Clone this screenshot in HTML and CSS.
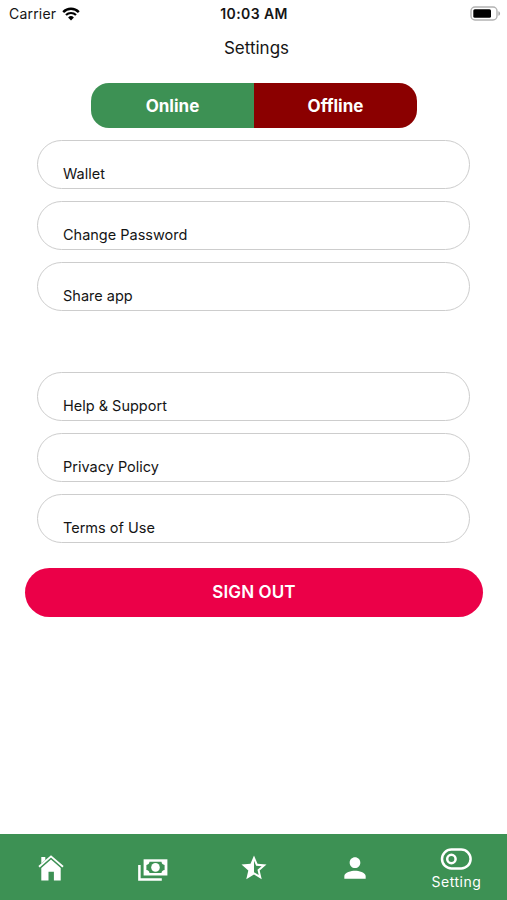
FILE: index.html
```
<!DOCTYPE html>
<html lang="en">
<head>
    <meta charset="UTF-8">
    <meta name="viewport" content="width=device-width, initial-scale=1.0">
    <title>Settings</title>
    <link rel="stylesheet" href="styles.css">
</head>
<body>
    <div class="status-bar">
        <div class="carrier">
            <span>Carrier</span>
            <svg width="18" height="14" viewBox="0 0 18 14">
                <path d="M1.2 5.1A11 11 0 0 1 16.8 5.1" fill="none" stroke="#000" stroke-width="2.5"/>
                <path d="M4 8.1A7 7 0 0 1 14 8.1" fill="none" stroke="#000" stroke-width="2.2"/>
                <path d="M6.1 10.4A4.2 4.2 0 0 1 11.9 10.4L9 13.4Z"/>
            </svg>
        </div>
        <div class="time">10:03 AM</div>
        <svg class="battery" width="31" height="15" viewBox="0 0 31 15">
            <rect x="1" y="1" width="26" height="13" rx="4" fill="#fff" stroke="#b3b3b3" stroke-width="1.4"/>
            <rect x="3.3" y="3.2" width="17.7" height="8.6" rx="1.5"/>
            <path d="M28.4 5.2c2.2.6 2.2 4 0 4.6z" fill="#aaa"/>
        </svg>
    </div>
    <h1>Settings</h1>
    <main>
        <div class="toggle">
            <button class="online">Online</button>
            <button class="offline">Offline</button>
        </div>
        <div class="menu">
            <a class="item">Wallet</a>
            <a class="item">Change Password</a>
            <a class="item">Share app</a>
        </div>
        <div class="menu more">
            <a class="item">Help &amp; Support</a>
            <a class="item">Privacy Policy</a>
            <a class="item">Terms of Use</a>
        </div>
        <button class="sign-out">SIGN OUT</button>
    </main>
    <nav class="tabs">
        <a class="tab">
            <svg width="26" height="26" viewBox="0 0 26 26" fill="#fff">
                <path d="M3.3 12.9L13 4.4l9.7 8.5V25.5h-6.8v-8.7h-5.4v8.7H3.3z"/>
                <path d="M1 11.7L13 1.4l12 10.3" fill="none" stroke="#fff" stroke-width="1.9"/>
                <path d="M3.3 2h4v3.1l-4 3.5z"/>
            </svg>
        </a>
        <a class="tab cash">
            <svg width="30" height="22" viewBox="0 0 30 22">
                <path d="M1.4 6v14.6H23.8" fill="none" stroke="#fff" stroke-width="2.5"/>
                <path d="M5.6.3h23.8v16.2H5.6z" fill="#fff"/>
                <path d="M11.5 2.8h12a3.4 3.4 0 0 0 3.1 3.1v5a3.4 3.4 0 0 0-3.1 3.1h-12a3.4 3.4 0 0 0-3.1-3.1v-5a3.4 3.4 0 0 0 3.1-3.1z" fill="#3d9154"/>
                <circle cx="17.5" cy="8.4" r="4.3" fill="#fff"/>
            </svg>
        </a>
        <a class="tab">
            <svg width="30" height="30" viewBox="0 0 24 24" fill="#fff">
                <path d="M12,15.4V6.1L13.71,10.13L18.09,10.5L14.77,13.39L15.76,17.67M22,9.24L14.81,8.63L12,2L9.19,8.63L2,9.24L7.45,13.97L5.82,21L12,17.27L18.18,21L16.54,13.97L22,9.24Z"/>
            </svg>
        </a>
        <a class="tab">
            <svg width="32" height="32" viewBox="0 0 24 24" fill="#fff">
                <path d="M12 12c2.21 0 4-1.79 4-4s-1.79-4-4-4-4 1.79-4 4 1.79 4 4 4zm0 2c-2.67 0-8 1.34-8 4v2h16v-2c0-2.66-5.33-4-8-4z"/>
            </svg>
        </a>
        <a class="tab active">
            <svg width="32" height="22" viewBox="0 0 32 22" fill="none" stroke="#fff" stroke-width="2.5">
                <rect x="2" y="1.6" width="28.6" height="18.8" rx="9.4"/>
                <circle cx="11.4" cy="11" r="4.2"/>
            </svg>
            <span>Setting</span>
        </a>
    </nav>
</body>
</html>
```
FILE: styles.css
```
* {
    box-sizing: border-box;
}
body {
    margin: 0;
    height: 900px;
    display: flex;
    flex-direction: column;
    font-family: Inter, sans-serif;
    background-color: #fff;
    color: #151515;
}
button {
    border: none;
    padding: 0;
    font-family: inherit;
    color: white;
}
.status-bar {
    display: grid;
    grid-template-columns: 1fr auto 1fr;
    align-items: center;
    height: 27px;
    padding: 0 6px 0 9px;
}
.carrier {
    display: flex;
    align-items: center;
    gap: 6px;
    font-size: 14px;
    letter-spacing: 0.2px;
}
.time {
    margin-left: -2px;
    font-size: 14px;
    font-weight: 600;
    letter-spacing: 0.4px;
}
.battery {
    justify-self: end;
}
h1 {
    margin: 0;
    padding-left: 6px;
    height: 42px;
    line-height: 42px;
    text-align: center;
    font-size: 17px;
    font-weight: 400;
}
main {
    flex: 1;
    padding: 14px 25px 0;
}
.toggle {
    display: flex;
    width: 326px;
    height: 45px;
    margin: 0 auto 12px 66px;
    border-radius: 18px;
    overflow: hidden;
}
.toggle button {
    flex: 1;
    font-size: 17px;
    font-weight: 700;
}
.online {
    background-color: #3d9154;
}
.offline {
    background-color: #8b0000;
}
.menu {
    display: flex;
    flex-direction: column;
    gap: 12px;
    padding: 0 12px;
}
.more {
    margin-top: 61px;
}
.item {
    height: 49px;
    padding: 23px 0 0 25px;
    border: 1px solid #cdcdcd;
    border-radius: 25px;
    font-size: 14.5px;
    line-height: 20px;
}
.sign-out {
    display: block;
    width: 458px;
    height: 49px;
    margin-top: 25px;
    padding-bottom: 1px;
    border-radius: 25px;
    background-color: #eb0048;
    font-size: 17px;
    font-weight: 600;
    letter-spacing: 0.1px;
}
.tabs {
    display: flex;
    height: 66px;
    background-color: #3d9154;
}
.tab {
    flex: 1 1 0;
    display: flex;
    flex-direction: column;
    align-items: center;
    justify-content: center;
    padding-top: 2px;
    color: white;
}
.cash {
    padding-top: 6px;
    padding-left: 1px;
}
.active {
    gap: 2px;
    padding-top: 5px;
}
.active span {
    font-size: 14px;
    line-height: 20px;
    letter-spacing: 0.5px;
}
```
